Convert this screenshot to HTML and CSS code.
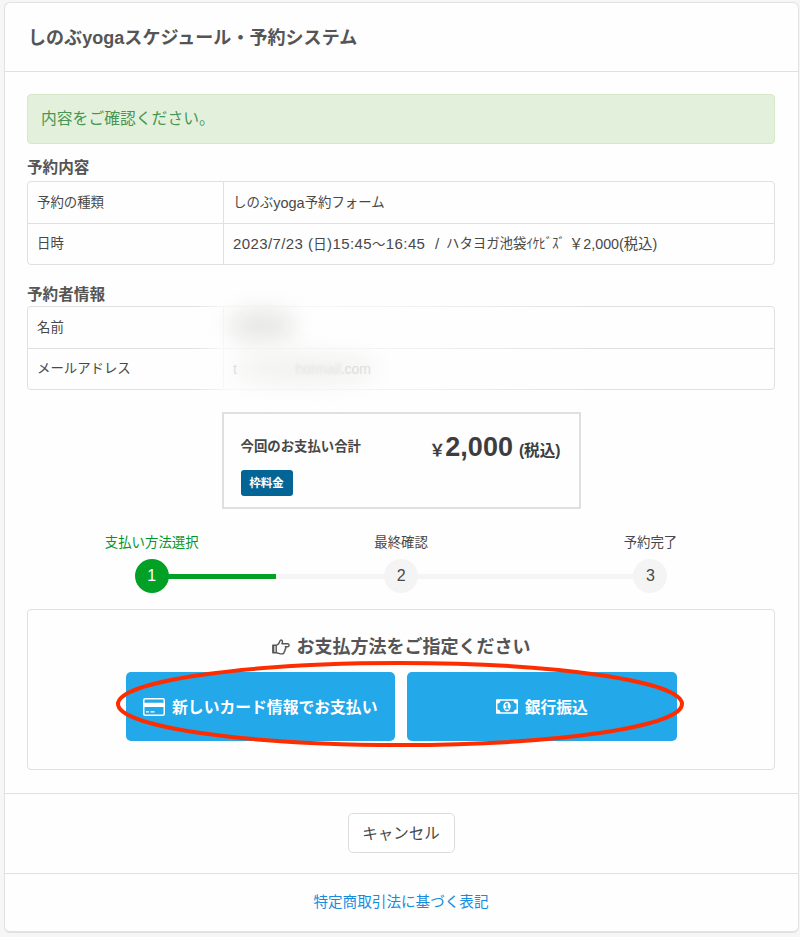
FILE: index.html
```html
<!DOCTYPE html>
<html lang="ja">
<head>
<meta charset="utf-8">
<title>しのぶyogaスケジュール・予約システム</title>
<link rel="stylesheet" href="styles.css">
</head>
<body>
<div class="card">
  <header class="card-header"><h1>しのぶyogaスケジュール・予約システム</h1></header>
  <main class="card-body">
    <div class="alert">内容をご確認ください。</div>
    <h2>予約内容</h2>
    <div class="table">
      <div class="row"><div class="key">予約の種類</div><div class="value">しのぶ<span class="latin">yoga</span>予約フォーム</div></div>
      <div class="row"><div class="key">日時</div><div class="value"><span class="date">2023/7/23 (<span class="day">日</span>)15:45<span class="day">〜</span>16:45</span><span class="slash">/</span><span class="course">ハタヨガ池袋<span class="half">ｲｹﾋﾞｽﾞ</span></span><span class="price">￥2,000(税込)</span></div></div>
    </div>
    <h2 class="person">予約者情報</h2>
    <div class="table private">
      <div class="row"><div class="key">名前</div><div class="value"></div></div>
      <div class="row"><div class="key">メールアドレス</div><div class="value"></div></div>
      <div class="veil"></div>
      <div class="smudge name"></div>
      <div class="smudge mail"></div>
      <div class="mail-text"><span>t</span><span class="soft">hotmail</span><span>.com</span></div>
    </div>
    <section class="total">
      <div class="total-left"><strong>今回のお支払い合計</strong><span class="badge">枠料金</span></div>
      <div class="amount"><span class="yen">￥</span><b>2,000</b><span class="tax">(税込)</span></div>
    </section>
    <ol class="steps">
      <li class="active"><span class="label">支払い方法選択</span><span class="dot">1</span></li>
      <li><span class="label">最終確認</span><span class="dot">2</span></li>
      <li><span class="label">予約完了</span><span class="dot">3</span></li>
    </ol>
    <section class="payment">
      <h3><svg width="18" height="16" viewBox="0 0 18 16" fill="none" stroke="#555" stroke-width="1.4" stroke-linejoin="round"><path d="M.8 6.2h3.4v7.6H.8zM4.2 6.2C6 6 7 4.5 7.5 3 7.8 1.8 8.2 1 9 1c1.7 0 1.8 2 .9 3.7h5.4c2.4 0 2.4 3.1 0 3.1h-2c1 1.1.6 2.2-.4 2.6.5 1.1.1 2-.8 2.4.2 1.4-.7 2.1-2.4 2.1-2.3 0-3.4-1.1-5.5-1.1"/><path d="M1.7 6.5v7" stroke-width="1.3"/></svg><span>お支払方法をご指定ください</span></h3>
      <div class="buttons">
        <button><svg width="22" height="18" viewBox="0 0 22 18"><rect x=".75" y=".75" width="20.5" height="16.5" rx="1.5" fill="none" stroke="#fff" stroke-width="1.5"/><path d="M1 4.7h20v4.2H1zM3 13.2h3v1.4H3zM7.5 13.2h4v1.4h-4z" fill="#fff"/></svg><span>新しいカード情報でお支払い</span></button>
        <button><svg width="22" height="15" viewBox="0 256 1920 1280"><path fill="#fff" fill-rule="evenodd" d="M768 1152h384v-96h-128V608H910L762 745l77 80q42-37 55-57h2v288H768zM1280 896c0 200-120 416-320 416S640 1096 640 896s120-416 320-416 320 216 320 416zM1792 1152V640q-106 0-181-75t-75-181H384q0 106-75 181t-181 75v512q106 0 181 75t75 181h1152q0-106 75-181t181-75zM1920 320v1152q0 26-19 45t-45 19H64q-26 0-45-19t-19-45V320q0-26 19-45t45-19h1792q26 0 45 19t19 45z"/></svg><span>銀行振込</span></button>
      </div>
      <svg class="ring" width="570" height="90" viewBox="0 0 570 90"><ellipse cx="285" cy="45" rx="282" ry="41" fill="none" stroke="#fe2d00" stroke-width="4"/></svg>
    </section>
  </main>
  <div class="actions"><button class="cancel">キャンセル</button></div>
  <footer><a href="#">特定商取引法に基づく表記</a></footer>
</div>
</body>
</html>
```
FILE: styles.css
```css
* { box-sizing: border-box; }
body { margin: 0; padding: 2px 1px 0 4px; height: 937px; overflow: hidden; background: #f6f6f6; color: #484848; font: 13.4px/20px "Liberation Sans", "Noto Sans CJK JP", sans-serif; }
h1, h2, h3, ol { margin: 0; padding: 0; }
button { font-family: inherit; }
.card { height: 931px; background: #fefefe; border: 1px solid #e1e1e1; border-bottom-width: 2px; border-radius: 6px; }
.card-header { height: 69px; padding: 1px 23px 0; display: flex; align-items: center; border-bottom: 1px solid #e1e1e1; }
h1 { font-size: 18px; letter-spacing: .05px; color: #555; }
.card-body { height: 721px; padding: 22px 23px 0 22px; }
.alert { height: 50px; padding: 0 13px; display: flex; align-items: center; border: 1px solid #d6e9c6; border-radius: 4px; background: #e3f1dc; color: #489653; font-size: 15.8px; }
h2 { height: 37px; padding-top: 13px; font-size: 15.6px; line-height: 22px; color: #555; }
h2.person { height: 41px; padding-top: 19px; }
.table { position: relative; height: 84px; border: 1px solid #e0e0e0; border-radius: 4px; }
.row { display: grid; grid-template-columns: 195px 1fr; height: 41px; }
.row + .row { border-top: 1px solid #e0e0e0; }
.key, .value { display: flex; align-items: center; padding-left: 9px; white-space: pre; }
.value { border-left: 1px solid #e0e0e0; }
.latin { font-size: 14.5px; }
.date { width: 202px; font-size: 15px; letter-spacing: .4px; }
.day { font-size: 13.4px; }
.slash { width: 11px; font-size: 15px; }
.course { width: 123px; }
.price { font-size: 14.3px; }
.half { letter-spacing: -.4px; }
.veil { position: absolute; left: 165px; top: -4px; width: 420px; height: 92px; background: linear-gradient(90deg, #fefefe00, #fefefecc 32px, #fefefeaa 180px, #fefefe00); }
.smudge { position: absolute; background: #e6e6e4; filter: blur(11px); border-radius: 50%; }
.smudge.name { left: 200px; top: 3px; width: 68px; height: 31px; }
.smudge.mail { left: 205px; top: 47px; width: 144px; height: 30px; background: #f1f1f0; }
.mail-text { position: absolute; left: 205px; top: 52px; display: flex; width: 138px; color: #dedede; font-size: 14px; }
.mail-text .soft { margin-left: auto; color: #e4e4e4; filter: blur(1px); }
.total { width: 359px; height: 97px; margin: 22px auto 0; padding: 24px 18px 0 17px; display: flex; justify-content: space-between; border: 2px solid #dfdfdf; position: relative; background: #fefefe; }
.total-left { display: flex; flex-direction: column; align-items: flex-start; line-height: 18px; }
.badge { width: 52px; height: 26px; margin-top: 14px; border-radius: 3px; background: #036596; color: #fff; font-size: 11.5px; font-weight: 700; line-height: 26px; text-align: center; }
.amount { display: flex; align-items: baseline; height: 30px; line-height: 19px; font-weight: 700; color: #3d3d3d; }
.yen { font-size: 16px; }
.amount b { font-size: 27px; }
.tax { margin-left: 6px; font-size: 15.6px; }
.steps { height: 100px; padding-top: 22px; display: grid; grid-template-columns: repeat(3, 249.4px); list-style: none; }
.steps li { display: grid; grid-template-rows: 28px 34px; justify-items: center; background: linear-gradient(#f5f5f5, #f5f5f5) 0 43px / 100% 5px no-repeat; }
.steps li:first-child { background: linear-gradient(#03a026, #03a026) 100% 43px / 50% 5px no-repeat; }
.steps li:last-child { background-size: 50% 5px; }
.steps .active { color: #03962b; }
.label { padding-top: 2px; }
.dot { width: 34px; height: 34px; border-radius: 50%; background: #f4f4f4; color: #484848; font-size: 16px; line-height: 34px; text-align: center; }
.active .dot { background: #03a026; color: #fff; }
.payment { position: relative; height: 161px; padding-top: 25px; border: 1px solid #e0e0e0; border-radius: 4px; }
h3 { height: 24px; display: flex; justify-content: center; align-items: center; gap: 7px; font-size: 18px; color: #555; }
.buttons { display: flex; justify-content: center; gap: 12px; margin-top: 13px; }
.buttons button { width: 269.5px; height: 69px; padding: 0; display: flex; align-items: center; justify-content: center; gap: 7px; border: 0; border-radius: 5px; background: #23a8ea; color: #fff; font-size: 15.8px; font-weight: 700; }
.ring { position: absolute; left: 87px; top: 49px; }
.actions { height: 81px; padding: 0 1px 1px 0; border-top: 1px solid #e1e1e1; border-bottom: 1px solid #e1e1e1; display: flex; align-items: center; justify-content: center; }
.cancel { width: 107px; height: 40px; padding: 0 0 2px; border: 1px solid #dcdcdc; border-radius: 5px; background: #fff; color: #484848; font-size: 15.5px; }
footer { height: 56px; padding: 0 1px 1px 0; display: flex; align-items: center; justify-content: center; }
footer a { color: #168ddc; font-size: 14.6px; text-decoration: none; }
```
